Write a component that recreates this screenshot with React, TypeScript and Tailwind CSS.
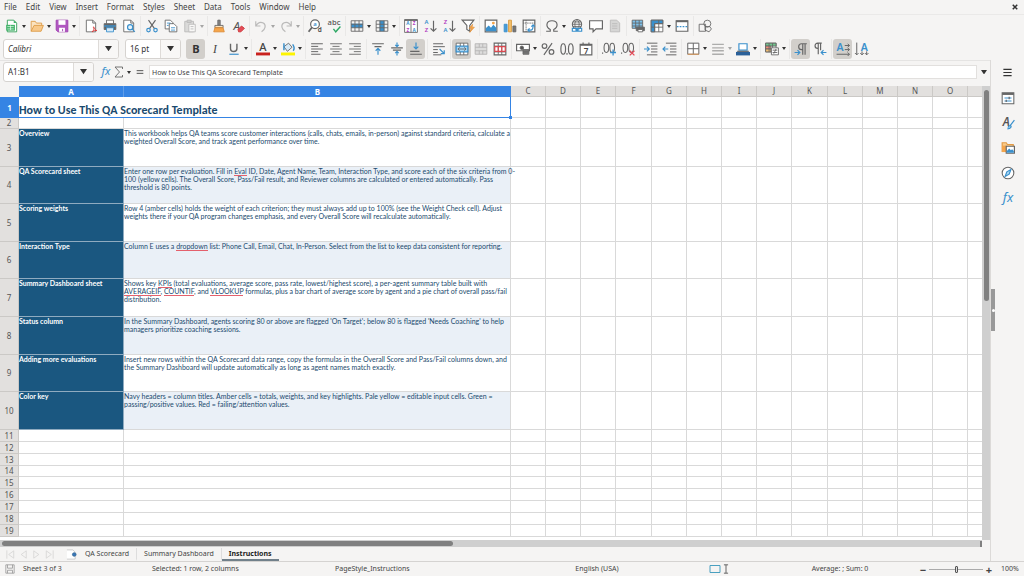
import React, { useState } from 'react'
import type { JSX, ReactNode } from 'react'

type Tool = { icon: string; label: string; menu?: boolean; active?: boolean; disabled?: boolean }
type SheetRow = { n: number; height: string; title: string; lines: ReactNode[] }

const G = '#666'
const B = '#3a90cc'

const text = (x: number, y: number, size: number, fill: string, value: string, extra: React.SVGProps<SVGTextElement> = {}) => (
  <text x={x} y={y} fontSize={size} fill={fill} stroke="none" textAnchor="middle" fontFamily="Noto Sans, sans-serif" {...extra}>
    {value}
  </text>
)

const alignLines = (short: string) => <path d={`M2 3h20M${short}7.5h12M2 12h20M${short}16.5h12M2 21h20`} />

const tableGrid = <path d="M2 3h20v18H2zM2 9h20M2 15h20M8.5 3v18M15.5 3v18" />

const icons: Record<string, ReactNode> = {
  new: (
    <>
      <path d="M4 2h11l5 5v15H4z" fill="#fff" stroke="#2f9e55" />
      <path d="M15 2l5 5h-5z" fill="#43b36a" stroke="none" />
      <path d="M2 10h15v10H2z" fill="#43b36a" stroke="none" />
      <path d="M4 13h11M4 17h11M9.500 11v8" stroke="#e8fff0" strokeWidth={1.2} />
    </>
  ),
  open: (
    <>
      <path d="M2 21V4h7l2 3h9v4" fill="#fbe3c0" stroke="#dd9a45" />
      <path d="M2 21l5-10h16l-4 10z" fill="#f8c98a" stroke="#dd9a45" />
    </>
  ),
  save: (
    <>
      <path d="M2 2h20v20H5l-3-3z" fill="#b057c0" stroke="#9b3dae" />
      <path d="M6 2h12v8H6z" fill="#fff" stroke="none" />
      <path d="M7 15h10v7H7z" fill="#fff" stroke="none" />
      <path d="M13 17v4" stroke="#9b3dae" />
    </>
  ),
  pdf: (
    <>
      <path d="M4 2h11l5 5v15H4z" fill="#fff" />
      <path d="M15 2v5h5" />
      <path d="M14 22c3-3 4-6 3-8s-3 1 5 6c-2-1-6 0-8 2z" stroke="#d33" />
    </>
  ),
  print: (
    <>
      <path d="M6 8V2h12v6" fill="#fff" />
      <path d="M2 8h20v10H2z" fill="#666" />
      <path d="M2 12h20" stroke={B} strokeWidth={2.5} />
      <path d="M6 15h12v7H6z" fill="#d5e9f7" stroke={B} />
    </>
  ),
  preview: (
    <>
      <path d="M3 2h12l5 5v15H3z" fill="#fff" />
      <path d="M15 2v5h5" />
      <circle cx="14" cy="14" r="4.500" stroke={B} fill="#e4f3fc" strokeWidth={2} />
      <path d="M17 17l5 5" stroke={B} strokeWidth={2} />
    </>
  ),
  cut: (
    <>
      <path d="M6 2l10 14M18 2L8 16" strokeWidth={2} />
      <circle cx="6" cy="19" r="3" stroke={B} strokeWidth={2} />
      <circle cx="18" cy="19" r="3" stroke={B} strokeWidth={2} />
    </>
  ),
  copy: (
    <>
      <path d="M2 2h9l4 4v11H2z" fill="#fff" />
      <path d="M9 8h8l5 5v9H9z" fill="#fff" />
      <path d="M5 7h6M5 11h3M12 15h7M12 19h7" stroke={B} />
    </>
  ),
  paste: (
    <>
      <path d="M3 4h15v18H3z" fill="#b4b4b4" />
      <path d="M7 2h7v4H7z" fill="#999" />
      <path d="M10 9h11v13H10z" fill="#fff" />
      <path d="M13 13h5M13 17h5" />
    </>
  ),
  clone: (
    <>
      <path d="M10 2h4v9h-4z" fill="#888" />
      <path d="M5 11h14v4H5z" fill="#fbe3c0" stroke="#666" />
      <path d="M5 15h14l2 7H3z" fill="#f5a54a" stroke="#dd8a35" />
    </>
  ),
  clear: (
    <>
      {text(10, 18, 20, '#555', 'A', { fontStyle: 'italic' })}
      <path d="M12 18l6-6 5 4-6 6h-4z" fill="#e34b58" stroke="#c33" />
    </>
  ),
  undo: <path d="M3 4v8h8M3 12c3-5 8-8 13-5s4 10-3 15" strokeWidth={2} />,
  redo: <path d="M21 4v8h-8M21 12c-3-5-8-8-13-5s-4 10 3 15" strokeWidth={2} />,
  find: (
    <>
      <circle cx="12" cy="9" r="7.500" strokeWidth={2} fill="#fff" />
      <path d="M7 14l-6 8" strokeWidth={3} />
      {text(12, 12, 10, B, 'a', { fontWeight: 600 })}
      {text(20, 23, 11, '#444', 'd', { fontWeight: 600 })}
    </>
  ),
  spell: (
    <>
      {text(12, 10, 13, '#555', 'abc', { fontWeight: 500 })}
      <path d="M11 17l4 5 8-9" stroke="#2fa865" strokeWidth={2.4} />
    </>
  ),
  row: (
    <>
      <path d="M2 8h20v7H2z" fill={B} stroke="none" />
      {tableGrid}
    </>
  ),
  column: (
    <>
      <path d="M8 3h8v18H8z" fill={B} stroke="none" />
      {tableGrid}
    </>
  ),
  sort: (
    <>
      <path d="M1 1h22v22H1zM12 2v21" fill="#fff" />
      <path d="M1 2h22" strokeWidth={2.5} />
      {text(6.5, 11, 8, B, 'A', { fontWeight: 700 })}
      {text(6.5, 22, 8, '#b03bc0', 'Z', { fontWeight: 700 })}
      {text(17.5, 11, 8, '#b03bc0', 'Z', { fontWeight: 700 })}
      {text(17.5, 22, 8, B, 'A', { fontWeight: 700 })}
    </>
  ),
  asc: (
    <>
      {text(6, 9, 10, B, 'A', { fontWeight: 600 })}
      {text(6, 23, 10, '#b03bc0', 'Z', { fontWeight: 600 })}
      <path d="M18 3v18M13 16l5 5 5-5" strokeWidth={2} />
    </>
  ),
  desc: (
    <>
      {text(6, 9, 10, '#b03bc0', 'Z', { fontWeight: 600 })}
      {text(6, 23, 10, B, 'A', { fontWeight: 600 })}
      <path d="M18 3v18M13 16l5 5 5-5" strokeWidth={2} />
    </>
  ),
  filter: (
    <>
      <path d="M2 2h20l-7 9v10l-5-3v-7z" fill="#fff" strokeWidth={2} />
      <path d="M20 9l-6 7h4l-3 7 8-9h-4z" fill="#f5a54a" stroke="#e28b30" strokeWidth={1} />
    </>
  ),
  image: (
    <>
      <path d="M2 2h20v20H2z" fill="#fff" strokeWidth={2} />
      <path d="M3 21v-5l5-5 4 4 4-5 5 5v6z" fill={B} stroke="none" />
      <circle cx="16" cy="7" r="2.500" fill="#f5a54a" stroke="none" />
    </>
  ),
  chart: (
    <>
      <path d="M2 9h5v13H2z" fill="#4a9bd5" stroke={B} />
      <path d="M9.500 2h5v20h-5z" fill="#f5c06a" stroke="#d79a40" />
      <path d="M17 12h5v10h-5z" fill="#777" />
    </>
  ),
  pivot: (
    <>
      <path d="M2 2h20v20H2z" fill="#fff" strokeWidth={2} />
      <path d="M2 7h20M7 2v20" strokeDasharray="2 1" />
      <path d="M10 19h5q4 0 4-8M16 13l3-3 3 3M13 16l-3 3 3 3" stroke={B} strokeWidth={2} />
    </>
  ),
  omega: <path d="M2 21h7v-3C1 14 1 3 12 3s11 11 3 15v3h7" strokeWidth={2} />,
  link: (
    <>
      <circle cx="12" cy="9" r="8" strokeWidth={1.8} />
      <path d="M4 9h16M5 5h14M5 13h14M12 1c-5 5-5 11 0 16M12 1c5 5 5 11 0 16" />
      <path d="M4 16h7v5H4zM13 16h7v5h-7zM9 18.500h7" stroke={B} strokeWidth={2} fill="#fff" />
    </>
  ),
  comment: <path d="M1 3h22v14H12l-5 5v-5H1z" fill="#fff" strokeWidth={2} />,
  header: (
    <>
      <path d="M4 2h11l5 5v15H4z" fill="#aaa" stroke="#666" />
      <path d="M7 8h9M7 12h9M7 16h9" stroke="#666" />
    </>
  ),
  printArea: (
    <>
      <path d="M2 2h18v14H2z" fill="#7cc0ea" />
      <path d="M2 7h18M2 12h18M8 2v14M14 2v14" />
      <path d="M9 14h14v6H9z" fill="#666" />
      <path d="M12 18h8v4h-8z" fill="#fff" />
    </>
  ),
  freeze: (
    <>
      <path d="M2 2h20v20H2z" fill="#fff" />
      <path d="M2 2h20v6H8v14H2z" fill={B} />
      <path d="M2 14h20M15 2v20M8 8h14M8 8v14" />
    </>
  ),
  split: (
    <>
      <path d="M2 3h20v18H2z" fill="#fff" strokeWidth={2} />
      <path d="M2 4h20" strokeWidth={3} />
      <path d="M3 13h18" stroke={B} strokeDasharray="3 2" strokeWidth={2} />
    </>
  ),
  draw: (
    <>
      <path d="M2 9h11v12H2z" />
      <circle cx="16" cy="8" r="6" />
      <path d="M12 13h8l3 4-4 5-7-3z" />
    </>
  ),
  bold: text(12, 19, 19, '#333', 'B', { fontWeight: 700 }),
  italic: text(12, 19, 20, '#444', 'I', { fontStyle: 'italic', fontFamily: 'Liberation Serif, serif' }),
  underline: (
    <>
      <path d="M6 3v8c0 7 11 7 11 0V3" strokeWidth={2.4} />
      <path d="M4 21h16" stroke={B} strokeWidth={2} />
    </>
  ),
  color: (
    <>
      {text(12, 16, 19, '#444', 'A', { fontWeight: 500 })}
      <path d="M0 18h24v5H0z" fill="#c9211e" stroke="none" />
    </>
  ),
  fill: (
    <>
      <path d="M5 8l8-6 6 7-8 7z" fill="#d5e9f7" />
      <path d="M5 2v12M20 4c3 4 3 8 1 11" stroke={B} strokeWidth={2.5} />
      <path d="M0 18h24v5H0z" fill="#fdf400" stroke="none" />
    </>
  ),
  left: <path d="M2 3h20M2 7.500h12M2 12h20M2 16.500h12M2 21h16" strokeWidth={1.7} />,
  center: alignLines('6 '),
  right: alignLines('10 '),
  top: (
    <>
      <path d="M2 3h20M6 8h12" strokeWidth={2} />
      <path d="M12 22V12M8 15l4-4 4 4" stroke={B} strokeWidth={2} />
    </>
  ),
  middle: (
    <>
      <path d="M2 10h20M5 14h14" strokeWidth={2} />
      <path d="M12 1v7M9 5l3 3 3-3M12 23v-7M9 19l3-3 3 3" stroke={B} strokeWidth={2} />
    </>
  ),
  bottom: (
    <>
      <path d="M2 16h16M2 21h20" strokeWidth={2} />
      <path d="M12 1v11M8 8l4 4 4-4" stroke={B} strokeWidth={2} />
    </>
  ),
  wrap: (
    <>
      <path d="M2 3h17M2 8h20M2 13h8M2 18h8M2 22h14" strokeWidth={1.7} />
      <path d="M13 12l8 8M21 14v6h-6" stroke={B} strokeWidth={2} />
    </>
  ),
  mergeCenter: (
    <>
      <path d="M2 2h20v20H2z" fill="#fff" />
      <path d="M2 7h20v10H2z" fill="#a9d7f4" stroke={B} strokeWidth={2} />
      <path d="M9 2v5M15 2v5M9 17v5M15 17v5M5 12h14M8 9l-3 3 3 3M16 9l3 3-3 3" />
    </>
  ),
  merge: (
    <>
      <path d="M2 3h20v18H2z" fill="#bbb" stroke="#555" />
      <path d="M2 9h20M2 15h20M9 3v6M15 3v6M9 15v6M15 15v6" stroke="#555" />
    </>
  ),
  unmerge: (
    <>
      <path d="M2 2h20v20H2z" fill="#fff" strokeWidth={2} />
      <path d="M2 7h20M2 17h20M9 2v20M15 2v20" />
      <path d="M3 8h18v8H3zM9 8v8M15 8v8" stroke="#d9484f" strokeWidth={2} />
    </>
  ),
  currency: (
    <>
      <path d="M1 4h22v11H1z" fill="#fff" strokeWidth={2} />
      <circle cx="10" cy="10" r="3" fill="#555" />
      <path d="M12 13h10v8H12zM12 17h10" fill="#777" />
    </>
  ),
  percent: (
    <>
      <circle cx="6" cy="7" r="4" strokeWidth={2} />
      <circle cx="18" cy="17" r="4" strokeWidth={2} />
      <path d="M19 2L5 22" strokeWidth={2} />
    </>
  ),
  number: (
    <>
      <ellipse cx="5.500" cy="12" rx="4" ry="9" strokeWidth={2} />
      <ellipse cx="18.500" cy="12" rx="4" ry="9" strokeWidth={2} />
      <path d="M12 19v3" strokeWidth={2} />
    </>
  ),
  date: (
    <>
      <path d="M2 4h20v18H2z" fill="#fff" strokeWidth={2} />
      <path d="M2 5h20" strokeWidth={3} />
      <path d="M7 1v4M17 1v4" strokeWidth={2} />
      {text(12, 20, 14, '#444', '7', { fontWeight: 600 })}
    </>
  ),
  addDecimal: (
    <>
      <ellipse cx="7.500" cy="10" rx="4" ry="8" strokeWidth={1.8} />
      <ellipse cx="17.500" cy="10" rx="4" ry="8" strokeWidth={1.8} />
      <path d="M1 18v2" strokeWidth={2} />
      <path d="M19 13v10M14 18h10" stroke={B} strokeWidth={2.2} />
    </>
  ),
  removeDecimal: (
    <>
      <ellipse cx="7.500" cy="10" rx="4" ry="8" strokeWidth={1.8} />
      <ellipse cx="17.500" cy="10" rx="4" ry="8" strokeWidth={1.8} />
      <path d="M1 18v2" strokeWidth={2} />
      <path d="M15 15l8 8M23 15l-8 8" stroke="#e34b58" strokeWidth={2.2} />
    </>
  ),
  indent: (
    <>
      <path d="M5 2h18M12 7h11M12 12h11M12 17h11M5 22h18" strokeWidth={1.7} />
      <path d="M0 12h9M5 8l4 4-4 4" stroke={B} strokeWidth={2} />
    </>
  ),
  outdent: (
    <>
      <path d="M5 2h18M12 7h11M12 12h11M12 17h11M5 22h18" strokeWidth={1.7} />
      <path d="M9 12H0M4 8l-4 4 4 4" stroke={B} strokeWidth={2} />
    </>
  ),
  borders: (
    <>
      <path d="M3 2h19v19H3z" fill="#fff" strokeWidth={1.7} />
      <path d="M12.500 2v19M3 11.500h19" strokeWidth={1.7} />
      <path d="M3 21h19" stroke="#d79a60" strokeWidth={2} />
    </>
  ),
  borderStyle: <path d="M2 4h20M2 10h20M2 15h20M2 21h20" stroke="#444" strokeWidth={2.4} />,
  borderColor: (
    <>
      <path d="M5 3h14v11H5z" fill="#fff" stroke={B} strokeWidth={2} />
      <path d="M2 16h20" strokeWidth={2} />
      <path d="M0 17h24v6H0z" fill="#2a6099" stroke="none" />
    </>
  ),
  conditional: (
    <>
      <path d="M1 2h18v15H1z" fill="#fff" />
      <path d="M1 2h18v5H1z" fill="#70c78c" />
      <path d="M1 7h9v5H1z" fill="#ef8b78" />
      <path d="M1 12h9v5H1z" fill="#f3bf73" />
      <path d="M7 2v15M13 2v15" />
      <path d="M11 10h12v12H11zM13 14h8M13 18h8M19 12l-4 8" fill="#fff" />
    </>
  ),
  ltr: (
    <>
      <path d="M22 3H13a5 5 0 000 10h2V3M15 13v9M19 3v19" strokeWidth={2} />
      <path d="M1 18h8M6 14l4 4-4 4" stroke={B} strokeWidth={2} />
    </>
  ),
  rtl: (
    <>
      <path d="M15 2H8a4 4 0 000 9h1V2M9 11v10M13 2v12" strokeWidth={2} />
      <path d="M23 18h-9M18 14l-4 4 4 4" stroke={B} strokeWidth={2} />
    </>
  ),
  textLtr: (
    <>
      {text(7, 16, 18, B, 'A', { fontWeight: 600 })}
      <path d="M15 6h8M20 3l3 3-3 3M15 13h8M20 10l3 3-3 3M1 21h22M20 18l3 3-3 3" strokeWidth={1.7} />
    </>
  ),
  textTtb: (
    <>
      {text(16, 15, 18, B, 'A', { fontWeight: 600 })}
      <path d="M3 1v21M0 19l3 3 3-3M12 16v6M9 19l3 3 3-3M20 16v6M17 19l3 3 3-3" strokeWidth={1.7} />
    </>
  ),
  hamburger: <path d="M3 5h18M3 12h18M3 19h18" stroke="#333" strokeWidth={2.6} />,
  properties: (
    <>
      <path d="M2 3h20v19H2z" fill="#fff" strokeWidth={1.8} />
      <path d="M2 5h20" strokeWidth={3.5} />
      <path d="M6 12h12M6 17h12" stroke={B} strokeWidth={1.8} />
      <path d="M14 10v4M9 15v4" strokeWidth={2} />
    </>
  ),
  styles: (
    <>
      {text(9, 17, 20, '#555', 'A', { fontStyle: 'italic', fontWeight: 600 })}
      <path d="M12 20c1-4 4-4 5-3s0 5-6 5M16 16l7-9" fill="#a9d7f4" stroke={B} strokeWidth={2} />
    </>
  ),
  gallery: (
    <>
      <path d="M2 19V3h7l2 3h10v4" fill="#f9cb8a" stroke="#e29a45" strokeWidth={2} />
      <path d="M2 8h7v11H2z" fill="#f5a54a" stroke="none" />
      <path d="M9 9h14v12H9z" fill="#fff" strokeWidth={2} />
      <path d="M10 20v-3l4-4 3 3 2-2 3 3v3z" fill={B} stroke="none" />
    </>
  ),
  navigator: (
    <>
      <circle cx="12" cy="12" r="10" fill="#fff" strokeWidth={1.8} />
      <path d="M17 6l-3 8-7 4 3-8z" fill="#a9d7f4" stroke={B} strokeWidth={2} />
    </>
  ),
  functions: text(12, 18, 22, B, 'fx', { fontStyle: 'italic', fontFamily: 'Noto Sans, sans-serif' }),
  sum: <path d="M19 6V2H4l9 10-9 10h15v-4" strokeWidth={1.8} />,
  equals: <path d="M2 8h20M2 16h20" stroke="#555" strokeWidth={3} />,
  first: <path d="M4 3v18M19 4l-11 8 11 8z" />,
  prev: <path d="M18 4L7 12l11 8z" />,
  next: <path d="M6 4l11 8-11 8z" />,
  last: <path d="M20 3v18M5 4l11 8-11 8z" />,
  addSheet: (
    <>
      <path d="M2 2h13l5 5v15H2" fill="#fff" stroke="#bbb" />
      <circle cx="18" cy="12" r="4" fill="#3a78b8" stroke="#2b6090" />
    </>
  ),
  disk: <path d="M2 2h20v20H2zM6 2v8h12V2M6 22v-7h12v7" stroke="#999" strokeWidth={2} />,
  selection: <path d="M2 5h20v14H2z" stroke="#4aa0c0" strokeWidth={2} />,
  cursor: <path d="M7 2h10M7 22h10M12 2v20" strokeWidth={2.4} />,
}

const standardTools: Tool[][] = [
  [
    { icon: 'new', label: 'New', menu: true },
    { icon: 'open', label: 'Open', menu: true },
    { icon: 'save', label: 'Save', menu: true },
  ],
  [
    { icon: 'pdf', label: 'Export as PDF' },
    { icon: 'print', label: 'Print' },
    { icon: 'preview', label: 'Print Preview' },
  ],
  [
    { icon: 'cut', label: 'Cut' },
    { icon: 'copy', label: 'Copy' },
    { icon: 'paste', label: 'Paste', menu: true, disabled: true },
  ],
  [
    { icon: 'clone', label: 'Clone Formatting' },
    { icon: 'clear', label: 'Clear Formatting' },
  ],
  [
    { icon: 'undo', label: 'Undo', menu: true, disabled: true },
    { icon: 'redo', label: 'Redo', menu: true, disabled: true },
  ],
  [
    { icon: 'find', label: 'Find and Replace' },
    { icon: 'spell', label: 'Spelling' },
  ],
  [
    { icon: 'row', label: 'Row', menu: true },
    { icon: 'column', label: 'Column', menu: true },
  ],
  [
    { icon: 'sort', label: 'Sort' },
    { icon: 'asc', label: 'Sort Ascending' },
    { icon: 'desc', label: 'Sort Descending' },
    { icon: 'filter', label: 'AutoFilter' },
  ],
  [
    { icon: 'image', label: 'Insert Image' },
    { icon: 'chart', label: 'Insert Chart' },
    { icon: 'pivot', label: 'Insert Pivot Table' },
  ],
  [
    { icon: 'omega', label: 'Special Character', menu: true },
    { icon: 'link', label: 'Hyperlink' },
    { icon: 'comment', label: 'Comment' },
    { icon: 'header', label: 'Headers and Footers', disabled: true },
  ],
  [
    { icon: 'printArea', label: 'Define Print Area' },
    { icon: 'freeze', label: 'Freeze Rows and Columns', menu: true },
    { icon: 'split', label: 'Split Window' },
  ],
  [{ icon: 'draw', label: 'Draw Functions' }],
]

const formatTools: Tool[][] = [
  [
    { icon: 'bold', label: 'Bold', active: true },
    { icon: 'italic', label: 'Italic' },
    { icon: 'underline', label: 'Underline', menu: true },
  ],
  [
    { icon: 'color', label: 'Font Color', menu: true },
    { icon: 'fill', label: 'Background Color', menu: true },
  ],
  [
    { icon: 'left', label: 'Align Left' },
    { icon: 'center', label: 'Align Center' },
    { icon: 'right', label: 'Align Right' },
  ],
  [
    { icon: 'top', label: 'Align Top' },
    { icon: 'middle', label: 'Center Vertically' },
    { icon: 'bottom', label: 'Align Bottom', active: true },
  ],
  [{ icon: 'wrap', label: 'Wrap Text' }],
  [
    { icon: 'mergeCenter', label: 'Merge and Center', active: true },
    { icon: 'merge', label: 'Merge Cells', disabled: true },
    { icon: 'unmerge', label: 'Unmerge Cells' },
  ],
  [
    { icon: 'currency', label: 'Format as Currency', menu: true },
    { icon: 'percent', label: 'Format as Percent' },
    { icon: 'number', label: 'Format as Number' },
    { icon: 'date', label: 'Format as Date' },
  ],
  [
    { icon: 'addDecimal', label: 'Add Decimal Place' },
    { icon: 'removeDecimal', label: 'Delete Decimal Place' },
  ],
  [
    { icon: 'indent', label: 'Increase Indent' },
    { icon: 'outdent', label: 'Decrease Indent' },
  ],
  [
    { icon: 'borders', label: 'Borders', menu: true },
    { icon: 'borderStyle', label: 'Border Style', menu: true, disabled: true },
    { icon: 'borderColor', label: 'Border Color', menu: true },
  ],
  [{ icon: 'conditional', label: 'Conditional Formatting', menu: true }],
  [
    { icon: 'ltr', label: 'Left-To-Right', active: true },
    { icon: 'rtl', label: 'Right-To-Left' },
  ],
  [
    { icon: 'textLtr', label: 'Text direction from left to right', active: true },
    { icon: 'textTtb', label: 'Text direction from top to bottom' },
  ],
]

const Typo = ({ children }: { children: ReactNode }) => (
  <span className="border-b border-[#e4606c]">{children}</span>
)

const rows: SheetRow[] = [
  {
    n: 3,
    height: 'h-[38px]',
    title: 'Overview',
    lines: [
      'This workbook helps QA teams score customer interactions (calls, chats, emails, in-person) against standard criteria, calculate a',
      'weighted Overall Score, and track agent performance over time.',
    ],
  },
  {
    n: 4,
    height: 'h-[37px]',
    title: 'QA Scorecard sheet',
    lines: [
      <>Enter one row per evaluation. Fill in <Typo>Eval</Typo> ID, Date, Agent Name, Team, Interaction Type, and score each of the six criteria from 0-</>,
      '100 (yellow cells). The Overall Score, Pass/Fail result, and Reviewer columns are calculated or entered automatically. Pass',
      'threshold is 80 points.',
    ],
  },
  {
    n: 5,
    height: 'h-[38px]',
    title: 'Scoring weights',
    lines: [
      'Row 4 (amber cells) holds the weight of each criterion; they must always add up to 100% (see the Weight Check cell). Adjust',
      'weights there if your QA program changes emphasis, and every Overall Score will recalculate automatically.',
    ],
  },
  {
    n: 6,
    height: 'h-[37px]',
    title: 'Interaction Type',
    lines: [
      <>Column E uses a <Typo>dropdown</Typo> list: Phone Call, Email, Chat, In-Person. Select from the list to keep data consistent for reporting.</>,
    ],
  },
  {
    n: 7,
    height: 'h-[38px]',
    title: 'Summary Dashboard sheet',
    lines: [
      <>Shows key <Typo>KPIs</Typo> (total evaluations, average score, pass rate, lowest/highest score), a per-agent summary table built with</>,
      <><Typo>AVERAGEIF</Typo>, <Typo>COUNTIF</Typo>, and <Typo>VLOOKUP</Typo> formulas, plus a bar chart of average score by agent and a pie chart of overall pass/fail</>,
      'distribution.',
    ],
  },
  {
    n: 8,
    height: 'h-[38px]',
    title: 'Status column',
    lines: [
      "In the Summary Dashboard, agents scoring 80 or above are flagged 'On Target'; below 80 is flagged 'Needs Coaching' to help",
      'managers prioritize coaching sessions.',
    ],
  },
  {
    n: 9,
    height: 'h-[37px]',
    title: 'Adding more evaluations',
    lines: [
      'Insert new rows within the QA Scorecard data range, copy the formulas in the Overall Score and Pass/Fail columns down, and',
      'the Summary Dashboard will update automatically as long as agent names match exactly.',
    ],
  },
  {
    n: 10,
    height: 'h-[38px]',
    title: 'Color key',
    lines: [
      'Navy headers = column titles. Amber cells = totals, weights, and key highlights. Pale yellow = editable input cells. Green =',
      'passing/positive values. Red = failing/attention values.',
    ],
  },
]

const emptyRows = [11, 12, 13, 14, 15, 16, 17, 18, 19]
const columns = ['C', 'D', 'E', 'F', 'G', 'H', 'I', 'J', 'K', 'L', 'M', 'N', 'O']
const menus = ['File', 'Edit', 'View', 'Insert', 'Format', 'Styles', 'Sheet', 'Data', 'Tools', 'Window', 'Help']

function Icon({ name, className = 'size-[14px]' }: { name: string; className?: string }) {
  return (
    <svg viewBox="0 0 24 24" className={`${className} shrink-0 overflow-visible`} fill="none" stroke={G} strokeWidth={1.5} aria-hidden="true">
      {icons[name]}
    </svg>
  )
}

function Caret({ className = 'w-[4px]' }: { className?: string }) {
  return (
    <svg viewBox="0 0 8 6" className={`${className} shrink-0`} fill="#333" aria-hidden="true">
      <path d="M0 0h8L4 6z" />
    </svg>
  )
}

function ToolGroups({ groups }: { groups: Tool[][] }) {
  return (
    <>
      {groups.map((group, i) => (
        <React.Fragment key={group[0].icon}>
          {i > 0 && <span className="flex h-5 w-1 shrink-0 justify-center"><i className="w-px bg-[#e9e8e7]" /></span>}
          {group.map((tool) => (
            <span key={tool.icon} className={`flex shrink-0 items-center ${tool.disabled ? 'opacity-40' : ''}`}>
              <button
                type="button"
                aria-label={tool.label}
                disabled={tool.disabled}
                className={`flex h-5 w-[19px] items-center justify-center rounded-[3px] ${tool.active ? 'bg-[#d2cfcb]' : ''}`}
              >
                <Icon name={tool.icon} />
              </button>
              {tool.menu && (
                <button type="button" aria-label={`${tool.label} options`} className="flex h-5 w-1.5 items-center justify-center">
                  <Caret />
                </button>
              )}
            </span>
          ))}
        </React.Fragment>
      ))}
    </>
  )
}

function Combo({ label, value, className, inputClass = '' }: { label: string; value: string; className: string; inputClass?: string }) {
  return (
    <div className={`flex h-5 shrink-0 overflow-hidden rounded-[3px] border border-[#d6d3d0] bg-white ${className}`}>
      <input aria-label={label} defaultValue={value} className={`min-w-0 flex-1 px-1 text-[8px] text-[#333] outline-none ${inputClass}`} />
      <button type="button" aria-label={`${label} list`} className="flex w-5 items-center justify-center border-l border-[#dedbd8] bg-[#f8f7f6]">
        <Caret className="w-[7px]" />
      </button>
    </div>
  )
}

function EmptyCells() {
  return (
    <>
      {columns.map((c) => (
        <td key={c} className="border-r border-b border-[#d9d9d9]" />
      ))}
      <td className="border-b border-[#d9d9d9]" />
    </>
  )
}

function Sheet() {
  const rowHead = 'border-r border-b border-[#cbc9c6] bg-[#e2e0de] p-0 text-center text-[8px] leading-[8px] font-normal text-[#555]'
  return (
    <table className="w-full table-fixed border-separate border-spacing-0 bg-white">
      <colgroup>
        <col className="w-[19px]" />
        <col className="w-[105px]" />
        <col className="w-[387px]" />
        {columns.map((c) => (
          <col key={c} className={c === 'F' || c === 'K' ? 'w-9' : 'w-[35px]'} />
        ))}
        <col />
      </colgroup>
      <thead>
        <tr className="h-[11px] text-[8px] leading-[8px]">
          <td className="bg-[#f5f4f3] p-0" />
          <th className="border-r border-[#5f9de9] bg-[#3584e4] p-0 font-bold text-white">A</th>
          <th className="bg-[#3584e4] p-0 font-bold text-white">B</th>
          {columns.map((c) => (
            <th key={c} className="border-r border-b border-[#cbc9c6] bg-[#e2e0de] p-0 font-normal text-[#555]">{c}</th>
          ))}
          <th className="border-b border-[#cbc9c6] bg-[#e2e0de] p-0" />
        </tr>
      </thead>
      <tbody>
        <tr className="h-[21px]">
          <th className="bg-[#3584e4] p-0 text-center text-[8px] leading-[8px] font-bold text-white">1</th>
          <td colSpan={2} className="relative border-r border-b border-[#3584e4] p-0 align-bottom font-[Carlito,Lato,sans-serif] text-[12px] leading-[14px] font-bold whitespace-nowrap text-[#1a4a6e]">
            How to Use This QA Scorecard Template
            <i className="absolute -right-0.5 -bottom-0.5 size-[3px] bg-[#3584e4]" />
          </td>
          <EmptyCells />
        </tr>
        <tr className="h-[11px]">
          <th className={rowHead}>2</th>
          <td className="border-r border-b border-[#d9d9d9]" />
          <td className="border-r border-b border-[#d9d9d9]" />
          <EmptyCells />
        </tr>
        {rows.map((row) => (
          <tr key={row.n} className={`${row.height} font-[Lato,sans-serif] text-[7px] leading-[8px] whitespace-nowrap`}>
            <th className={`${rowHead} font-['Noto_Sans',sans-serif]`}>{row.n}</th>
            <td className="border-r border-b border-[#8fabc0] bg-[#1a5780] p-0 align-top font-bold text-white">{row.title}</td>
            <td className={`border-r border-b border-[#d9d9d9] p-0 align-top text-[#1a4a6e] ${row.n % 2 ? 'bg-white' : 'bg-[#eaf0f7]'}`}>
              {row.lines.map((line, i) => (
                <p key={i}>{line}</p>
              ))}
            </td>
            <EmptyCells />
          </tr>
        ))}
        {emptyRows.map((n) => (
          <tr key={n} className={n === 14 ? 'h-[11px]' : 'h-3'}>
            <th className={rowHead}>{n}</th>
            <td className="border-r border-b border-[#d9d9d9]" />
            <td className="border-r border-b border-[#d9d9d9]" />
            <EmptyCells />
          </tr>
        ))}
      </tbody>
    </table>
  )
}

function SheetTabs() {
  const [current, setCurrent] = useState('Instructions')
  return (
    <div className="flex h-[14px] shrink-0 items-center pl-1 text-[7px] text-[#444]">
      <div className="flex w-[60px] opacity-25">
        {['first', 'prev', 'next', 'last'].map((name) => (
          <button key={name} type="button" aria-label={`${name} sheet`} disabled className="flex w-[13px] justify-center">
            <Icon name={name} className="size-[11px]" />
          </button>
        ))}
      </div>
      <button type="button" aria-label="Add sheet" className="flex w-[14px] justify-center">
        <Icon name="addSheet" className="size-[11px]" />
      </button>
      {['QA Scorecard', 'Summary Dashboard', 'Instructions'].map((name) => (
        <button
          key={name}
          type="button"
          onClick={() => setCurrent(name)}
          className={`h-[13px] border-b-2 px-[7px] leading-[11px] ${current === name ? 'border-b-[#71808a] font-bold text-[#222]' : 'border-r border-r-[#ddd] border-b-transparent'}`}
        >
          {name}
        </button>
      ))}
    </div>
  )
}

function StatusBar() {
  return (
    <footer className="flex h-[15px] shrink-0 items-center border-t border-[#d5d3d1] text-[7px] text-[#444]">
      <Icon name="disk" className="mx-[5px] size-[10px]" />
      <span className="w-[124px] pl-[3px]">Sheet 3 of 3</span>
      <span className="w-[183px] pl-2">Selected: 1 row, 2 columns</span>
      <span className="w-[190px] pl-2">PageStyle_Instructions</span>
      <span className="w-[160px] text-center">English (USA)</span>
      <span className="flex w-[88px] items-center pl-8">
        <Icon name="selection" className="size-3" />
        <Icon name="cursor" className="size-[10px]" />
      </span>
      <span className="flex-1 text-center">Average: ; Sum: 0</span>
      <span className="flex w-[109px] items-center pl-1">
        <button type="button" aria-label="Zoom out" className="w-2 text-[11px] leading-[11px] font-bold">−</button>
        <input
          type="range"
          aria-label="Zoom"
          min={0}
          max={100}
          defaultValue={50}
          className="mx-0.5 h-2 w-[54px] appearance-none bg-[linear-gradient(#aaa,#aaa)] bg-[length:100%_1px] bg-center bg-no-repeat [&::-webkit-slider-thumb]:h-[7px] [&::-webkit-slider-thumb]:w-[3px] [&::-webkit-slider-thumb]:appearance-none [&::-webkit-slider-thumb]:rounded-[1px] [&::-webkit-slider-thumb]:border [&::-webkit-slider-thumb]:border-[#555] [&::-webkit-slider-thumb]:bg-[#ddd]"
        />
        <button type="button" aria-label="Zoom in" className="w-2 text-[11px] leading-[11px] font-bold">+</button>
        <span className="pl-2">100%</span>
      </span>
    </footer>
  )
}

export default function App(): JSX.Element {
  return (
    <div className="flex h-screen flex-col overflow-hidden bg-[#f5f4f3] font-['Noto_Sans',sans-serif] text-[#444]">
      <nav className="flex h-[14px] shrink-0 items-center justify-between pr-1.5 pl-1 text-[8px]">
        <div className="flex gap-[9px]">
          {menus.map((m) => (
            <button key={m} type="button" className="leading-[12px]">{m}</button>
          ))}
        </div>
        <button type="button" aria-label="Close" className="flex">
          <svg viewBox="0 0 8 8" className="size-[6px]" stroke="#333" strokeWidth={2} aria-hidden="true">
            <path d="M1 1l6 6M7 1L1 7" />
          </svg>
        </button>
      </nav>

      <div className="flex h-[23px] shrink-0 items-center border-t border-[#eae9e8] pl-0.5">
        <ToolGroups groups={standardTools} />
      </div>
      <div className="flex h-[23px] shrink-0 items-center pl-[3px]">
        <Combo label="Font name" value="Calibri" className="mr-1.5 w-[116px]" inputClass="italic" />
        <Combo label="Font size" value="16 pt" className="mr-[5px] w-14" />
        <ToolGroups groups={formatTools} />
      </div>

      <div className="flex min-h-0 flex-1">
        <main className="flex min-w-0 flex-1 flex-col">
          <div className="flex h-[26px] shrink-0 items-center border-t border-[#e5e4e3] pb-[3px] pl-[3px]">
            <Combo label="Name box" value="A1:B1" className="mr-1.5 w-[91px]" />
            <button type="button" aria-label="Function wizard" className="mr-px"><Icon name="functions" className="size-3" /></button>
            <button type="button" aria-label="Select function" className="flex items-center gap-0.5">
              <Icon name="sum" className="size-3" />
              <Caret />
            </button>
            <button type="button" aria-label="Formula" className="mx-[5px]"><Icon name="equals" className="size-2" /></button>
            <input
              aria-label="Input line"
              defaultValue="How to Use This QA Scorecard Template"
              className="h-[14px] min-w-0 flex-1 border border-[#e2e0de] bg-white px-0.5 text-[7px] outline-none"
            />
            <button type="button" aria-label="Expand formula bar" className="flex w-[13px] justify-center">
              <Caret className="w-[6px]" />
            </button>
          </div>

          <div className="flex min-h-0 flex-1">
            <div className="min-w-0 flex-1 overflow-hidden bg-white">
              <Sheet />
            </div>
            <div className="w-2 bg-[#cfcfcf] pt-1 pl-0.5">
              <div className="h-[211px] w-[5px] rounded-full bg-[#808080]" />
            </div>
          </div>
          <div className="mr-2 flex h-[7px] shrink-0 items-center justify-between bg-[#cfcfcf] pl-0.5">
            <div className="h-[5px] w-[46%] rounded-full bg-[#808080]" />
            <div className="h-[6px] w-0.5 bg-[#808080]" />
          </div>
          <SheetTabs />
        </main>

        <aside className="relative flex w-[34px] shrink-0 flex-col items-center border-l border-[#dcdad8]">
          {['hamburger', 'properties', 'styles', 'gallery', 'navigator', 'functions'].map((name) => (
            <button key={name} type="button" aria-label={name} className="flex h-[25px] items-center">
              <Icon name={name} className={name === 'hamburger' ? 'size-[11px]' : 'size-[14px]'} />
            </button>
          ))}
          <button type="button" aria-label="Hide sidebar" className="absolute top-[229px] left-0 flex h-[42px] w-1 items-center justify-center bg-[#999]">
            <i className="size-[3px] rounded-full bg-white" />
          </button>
        </aside>
      </div>
      <StatusBar />
    </div>
  )
}
